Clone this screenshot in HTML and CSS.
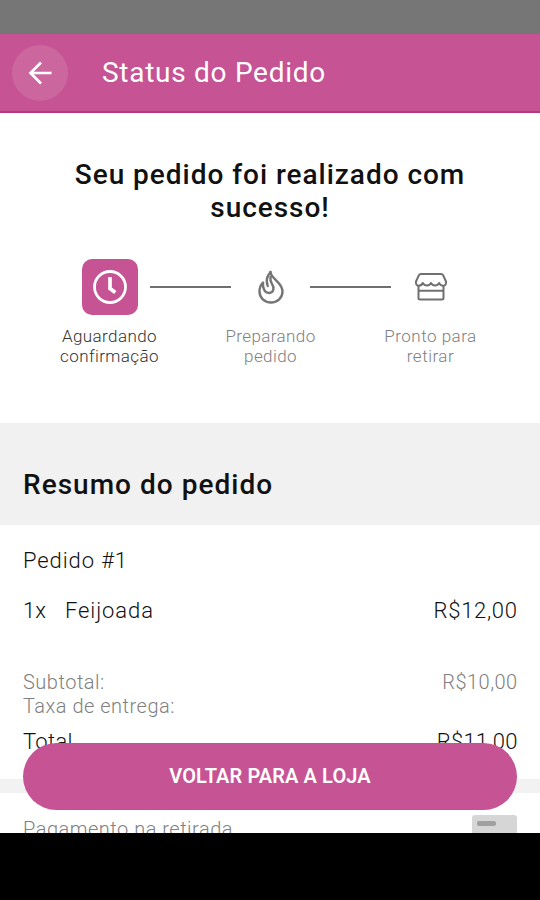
FILE: index.html
```html
<!DOCTYPE html>
<html lang="pt-BR">
<head>
<meta charset="utf-8">
<title>Status do Pedido</title>
<link rel="stylesheet" href="styles.css">
</head>
<body>
<div class="phone">
  <div class="statusbar"></div>
  <header class="header">
    <button class="back" aria-label="Voltar">
      <svg width="24" height="24" viewBox="0 0 24 24" fill="none" stroke="#fff" stroke-width="2.700"><path d="M23.500 12H2.500M13 1.500L2.500 12l10.500 10.500"/></svg>
    </button>
    <h1 class="title">Status do Pedido</h1>
  </header>
  <main class="content">
    <section class="progress">
      <h2 class="message">Seu pedido foi realizado com<br>sucesso!</h2>
      <div class="steps">
        <div class="step active">
          <div class="icon">
            <svg width="36" height="36" viewBox="0 0 36 36" fill="none" stroke="#fff"><circle cx="18" cy="18" r="15.500" stroke-width="2.800"/><path d="M18 8v11.500l5.300 4" stroke-width="3.700"/></svg>
          </div>
          <p class="label">Aguardando<br>confirmação</p>
        </div>
        <div class="line"></div>
        <div class="step middle">
          <div class="icon">
            <svg width="28" height="36" viewBox="0 0 28 36" fill="none" stroke="#757575" stroke-width="2.400" stroke-linejoin="round" stroke-linecap="round"><path d="M13.500 3C14 10 25.500 13 25.500 22.500C25.500 29 20.500 33.500 14 33.500S2.500 29 2.500 22.500C2.500 18.500 3.500 16 6 13.500C5.500 19 7.500 24 12 24C17 24 17.500 18.500 15 15C13.500 12.500 13 10.500 13.500 8"/><path d="M13.500 3C8.500 9 9.500 13 10.700 17"/></svg>
          </div>
          <p class="label">Preparando<br>pedido</p>
        </div>
        <div class="line"></div>
        <div class="step">
          <div class="icon">
            <svg width="34" height="30" viewBox="0 0 34 30" fill="none" stroke="#707070" stroke-width="2" stroke-linejoin="round"><path d="M7 2h20q1.500 0 2.200 1.300L32 9.500q.7 4-2.800 4.200q-3 0-4-2.700q-1.300 2.500-4.100 2.500T17 11q-1.300 2.500-4.100 2.500T8.800 11q-1.200 2.700-4 2.700Q1.300 13.500 2 9.500L4.800 3.300Q5.500 2 7 2Z"/><path d="M4.500 13v13q0 1.500 1.500 1.500h22q1.500 0 1.500-1.500V13M4.500 18.800h25"/></svg>
          </div>
          <p class="label last">Pronto para<br>retirar</p>
        </div>
      </div>
    </section>
    <div class="section-head"><h2 class="summary">Resumo do pedido</h2></div>
    <section class="order">
      <p class="number">Pedido #1</p>
      <div class="row item"><span class="qty">1x</span><span class="name">Feijoada</span><span class="price">R$12,00</span></div>
      <div class="row sub"><span>Subtotal:</span><span class="price">R$10,00</span></div>
      <div class="row sub"><span>Taxa de entrega:</span></div>
      <div class="row total"><span>Total</span><span class="price">R$11,00</span></div>
    </section>
    <div class="band"></div>
    <section class="payment">
      <span class="method">Pagamento na retirada</span>
      <div class="card"><div class="stripe"></div></div>
    </section>
    <button class="cta">VOLTAR PARA A LOJA</button>
  </main>
  <div class="navbar"></div>
</div>
</body>
</html>
```
FILE: styles.css
```css
* { box-sizing: border-box; margin: 0; padding: 0; }
body { font-family: Roboto, "Liberation Sans", sans-serif; background: #fff; color: #111; }
button { border: 0; font-family: inherit; }
.phone { width: 540px; height: 900px; display: flex; flex-direction: column; overflow: hidden; }
.statusbar { height: 34px; background: #767676; flex: none; }
.header { height: 79px; flex: none; background: #c65394; border-bottom: 2px solid #b83880; display: flex; align-items: center; padding-left: 12px; gap: 34px; }
.back { width: 56px; height: 56px; border-radius: 50%; background: #cc669f; display: flex; align-items: center; justify-content: center; }
.title { font-size: 28px; font-weight: 400; color: #fff; letter-spacing: .72px; line-height: 34px; padding-top: 1px; }
.content { position: relative; height: 720px; flex: none; overflow: hidden; }
.progress { height: 310px; padding-top: 45px; }
.message { text-align: center; font-size: 28px; font-weight: 500; line-height: 33px; letter-spacing: .97px; }
.steps { display: flex; justify-content: center; margin-top: 35px; }
.step { width: 120px; display: flex; flex-direction: column; align-items: center; color: #808080; margin: 0 -20px; }
.middle { margin-right: -21px; }
.icon { width: 56px; height: 56px; border-radius: 10px; display: flex; align-items: center; justify-content: center; }
.active { color: #333; }
.active .icon { background: #c65394; }
.line { width: 81px; height: 2px; background: #707070; margin-top: 27px; }
.label { text-align: center; font-size: 17px; line-height: 19.500px; font-weight: 300; letter-spacing: .4px; margin-top: 12px; white-space: nowrap; }
.last { letter-spacing: .5px; }
.section-head { height: 102px; background: #f1f1f1; padding: 45px 23px 0; }
.summary { font-size: 28px; font-weight: 500; line-height: 34px; letter-spacing: 1.02px; }
.order { height: 254px; padding: 22px 23px 0; font-size: 22px; font-weight: 300; line-height: 28px; }
.number, .name { letter-spacing: .9px; }
.row { display: flex; }
.price { margin-left: auto; letter-spacing: .7px; margin-right: -.7px; }
.item { margin-top: 22px; }
.qty { width: 42px; }
.sub { font-size: 20px; line-height: 24px; color: #808080; letter-spacing: .5px; }
.sub .price { letter-spacing: .5px; }
.item + .sub { margin-top: 45px; }
.total { margin-top: 10px; letter-spacing: .3px; }
.total .price { letter-spacing: .25px; }
.band { height: 14px; background: #f2f2f2; }
.payment { display: flex; justify-content: space-between; padding: 22px 23px 0; font-size: 20px; line-height: 28px; font-weight: 300; color: #808080; letter-spacing: .5px; }
.card { width: 45px; height: 30px; border-radius: 3px; background: #d6d6d6; padding: 6px 5px; }
.stripe { width: 19px; height: 5px; border-radius: 2px; background: #a0a0a0; }
.cta { position: absolute; left: 23px; right: 23px; top: 630px; height: 67px; border-radius: 34px; background: #c65394; color: #fff; font-size: 20px; font-weight: 600; letter-spacing: .1px; padding-bottom: 1px; }
.navbar { height: 67px; background: #000; flex: none; }
```
